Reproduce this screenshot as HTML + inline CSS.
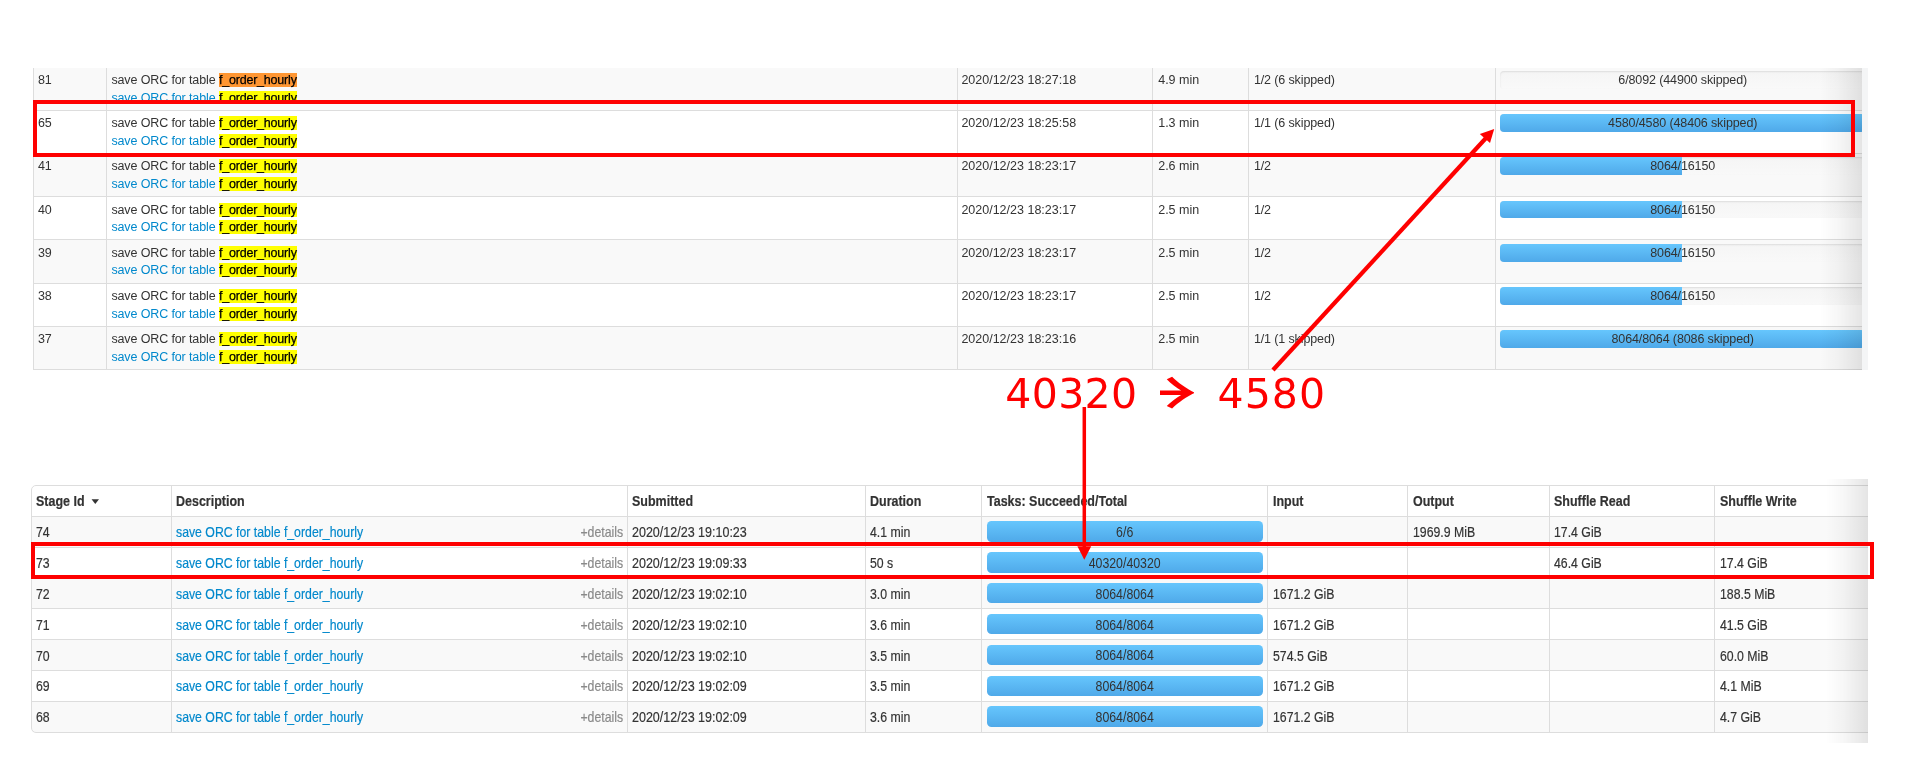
<!DOCTYPE html><html><head><meta charset="utf-8"><title>Spark stages</title><style>
*{box-sizing:border-box}
html,body{margin:0;padding:0}
body{width:1920px;height:776px;position:relative;overflow:hidden;background:#fff;font-family:"Liberation Sans",sans-serif;color:#333}
.abs,.t,.b,.v,.hz,.bg,.pb,.pf{position:absolute}
a{color:#0088cc;text-decoration:none}
/* top screenshot */
#top{position:absolute;left:0;top:68px;width:1862px;height:302px;overflow:hidden}
#top .in{position:absolute;left:0;top:-68px;width:1920px;height:776px;will-change:transform}
.t{font-size:12.5px;line-height:17px;white-space:nowrap;letter-spacing:-0.12px}
.hl,.hlo{background:#ffff00;color:#000;letter-spacing:-0.2px;-webkit-text-stroke:.25px #000}
.hlo{background:#ff9632}
.v{width:1px;background:#ddd}
.hz{height:1px;background:#ddd}
.bg{background:#f9f9f9}
.pb{border-radius:4px;background:linear-gradient(#f5f5f5,#f9f9f9);box-shadow:inset 0 1px 2px rgba(0,0,0,.1);overflow:hidden}
.pf{left:0;top:0;height:100%;background:linear-gradient(#66c6fd,#4fa9e9)}
.pt{position:absolute;left:0;top:0;width:100%;text-align:center;font-size:12.5px;line-height:17px;white-space:nowrap;letter-spacing:-0.12px}
/* bottom screenshot */
#bot{position:absolute;left:0;top:479px;width:1867.5px;height:264px;overflow:hidden}
#bot .in{position:absolute;left:0;top:-479px;width:1920px;height:776px;will-change:transform}
.b{font-size:15px;line-height:20px;white-space:nowrap;transform:scaleX(.819);transform-origin:0 50%;-webkit-text-stroke:.2px}
.b b{font-weight:bold}
.bc{position:absolute;left:0;top:0;width:100%;text-align:center;font-size:15px;line-height:20px;white-space:nowrap;transform:scaleX(.822)}
.det{color:#8a8a8a;transform-origin:100% 50%}
.pb2{position:absolute;border-radius:4.5px;background:linear-gradient(#66c6fd,#4fa9e9);overflow:hidden}
.shade{position:absolute;width:42px;background:linear-gradient(to right,rgba(0,0,0,0),rgba(0,0,0,.03) 42%,rgba(0,0,0,.1))}
</style></head><body>
<div id="top"><div class="in">
<div class="bg" style="left:33px;top:67.0px;width:1830px;height:43.2px"></div>
<div class="bg" style="left:33px;top:153.4px;width:1830px;height:43.2px"></div>
<div class="bg" style="left:33px;top:239.8px;width:1830px;height:43.2px"></div>
<div class="bg" style="left:33px;top:326.2px;width:1830px;height:43.2px"></div>
<div class="hz" style="left:33px;top:109.7px;width:1830px"></div>
<div class="hz" style="left:33px;top:152.9px;width:1830px"></div>
<div class="hz" style="left:33px;top:196.1px;width:1830px"></div>
<div class="hz" style="left:33px;top:239.3px;width:1830px"></div>
<div class="hz" style="left:33px;top:282.5px;width:1830px"></div>
<div class="hz" style="left:33px;top:325.7px;width:1830px"></div>
<div class="hz" style="left:33px;top:368.9px;width:1830px"></div>
<div class="t" style="left:37.9px;top:72.0px">81</div>
<div class="t" style="left:111.4px;top:72.0px">save ORC for table <span class="hlo">f_order_hourly</span></div>
<div class="t" style="left:111.4px;top:90.0px"><a>save ORC for table </a><span class="hl">f_order_hourly</span></div>
<div class="t" style="left:961.4px;top:72.0px;letter-spacing:0">2020/12/23 18:27:18</div>
<div class="t" style="left:1158.2px;top:72.0px;letter-spacing:0">4.9 min</div>
<div class="t" style="left:1253.9px;top:72.0px">1/2 (6 skipped)</div>
<div class="bg" style="left:100px;top:100.5px;width:500px;height:9.2px"></div>
<div class="pb" style="left:1500.2px;top:71.0px;width:365px;height:17.8px"><div class="pf" style="width:0.00%"></div><div class="pt" style="top:1.0px">6/8092 (44900 skipped)</div></div>
<div class="t" style="left:37.9px;top:115.0px">65</div>
<div class="t" style="left:111.4px;top:115.0px">save ORC for table <span class="hl">f_order_hourly</span></div>
<div class="t" style="left:111.4px;top:133.0px"><a>save ORC for table </a><span class="hl">f_order_hourly</span></div>
<div class="t" style="left:961.4px;top:115.0px;letter-spacing:0">2020/12/23 18:25:58</div>
<div class="t" style="left:1158.2px;top:115.0px;letter-spacing:0">1.3 min</div>
<div class="t" style="left:1253.9px;top:115.0px">1/1 (6 skipped)</div>
<div class="pb" style="left:1500.2px;top:114.2px;width:365px;height:17.8px"><div class="pf" style="width:100.00%"></div><div class="pt" style="top:0.8px">4580/4580 (48406 skipped)</div></div>
<div class="t" style="left:37.9px;top:158.0px">41</div>
<div class="t" style="left:111.4px;top:158.0px">save ORC for table <span class="hl">f_order_hourly</span></div>
<div class="t" style="left:111.4px;top:176.0px"><a>save ORC for table </a><span class="hl">f_order_hourly</span></div>
<div class="t" style="left:961.4px;top:158.0px;letter-spacing:0">2020/12/23 18:23:17</div>
<div class="t" style="left:1158.2px;top:158.0px;letter-spacing:0">2.6 min</div>
<div class="t" style="left:1253.9px;top:158.0px">1/2</div>
<div class="pb" style="left:1500.2px;top:157.4px;width:365px;height:17.8px"><div class="pf" style="width:49.93%"></div><div class="pt" style="top:0.6px">8064/16150</div></div>
<div class="t" style="left:37.9px;top:202.0px">40</div>
<div class="t" style="left:111.4px;top:202.0px">save ORC for table <span class="hl">f_order_hourly</span></div>
<div class="t" style="left:111.4px;top:219.0px"><a>save ORC for table </a><span class="hl">f_order_hourly</span></div>
<div class="t" style="left:961.4px;top:202.0px;letter-spacing:0">2020/12/23 18:23:17</div>
<div class="t" style="left:1158.2px;top:202.0px;letter-spacing:0">2.5 min</div>
<div class="t" style="left:1253.9px;top:202.0px">1/2</div>
<div class="pb" style="left:1500.2px;top:200.6px;width:365px;height:17.8px"><div class="pf" style="width:49.93%"></div><div class="pt" style="top:1.4px">8064/16150</div></div>
<div class="t" style="left:37.9px;top:245.0px">39</div>
<div class="t" style="left:111.4px;top:245.0px">save ORC for table <span class="hl">f_order_hourly</span></div>
<div class="t" style="left:111.4px;top:262.0px"><a>save ORC for table </a><span class="hl">f_order_hourly</span></div>
<div class="t" style="left:961.4px;top:245.0px;letter-spacing:0">2020/12/23 18:23:17</div>
<div class="t" style="left:1158.2px;top:245.0px;letter-spacing:0">2.5 min</div>
<div class="t" style="left:1253.9px;top:245.0px">1/2</div>
<div class="pb" style="left:1500.2px;top:243.8px;width:365px;height:17.8px"><div class="pf" style="width:49.93%"></div><div class="pt" style="top:1.2px">8064/16150</div></div>
<div class="t" style="left:37.9px;top:288.0px">38</div>
<div class="t" style="left:111.4px;top:288.0px">save ORC for table <span class="hl">f_order_hourly</span></div>
<div class="t" style="left:111.4px;top:306.0px"><a>save ORC for table </a><span class="hl">f_order_hourly</span></div>
<div class="t" style="left:961.4px;top:288.0px;letter-spacing:0">2020/12/23 18:23:17</div>
<div class="t" style="left:1158.2px;top:288.0px;letter-spacing:0">2.5 min</div>
<div class="t" style="left:1253.9px;top:288.0px">1/2</div>
<div class="pb" style="left:1500.2px;top:287.0px;width:365px;height:17.8px"><div class="pf" style="width:49.93%"></div><div class="pt" style="top:1.0px">8064/16150</div></div>
<div class="t" style="left:37.9px;top:331.0px">37</div>
<div class="t" style="left:111.4px;top:331.0px">save ORC for table <span class="hl">f_order_hourly</span></div>
<div class="t" style="left:111.4px;top:349.0px"><a>save ORC for table </a><span class="hl">f_order_hourly</span></div>
<div class="t" style="left:961.4px;top:331.0px;letter-spacing:0">2020/12/23 18:23:16</div>
<div class="t" style="left:1158.2px;top:331.0px;letter-spacing:0">2.5 min</div>
<div class="t" style="left:1253.9px;top:331.0px">1/1 (1 skipped)</div>
<div class="pb" style="left:1500.2px;top:330.2px;width:365px;height:17.8px"><div class="pf" style="width:100.00%"></div><div class="pt" style="top:0.8px">8064/8064 (8086 skipped)</div></div>
<div class="v" style="left:33.3px;top:60px;width:1px;height:309.4px"></div>
<div class="v" style="left:106.2px;top:60px;width:1px;height:309.4px"></div>
<div class="v" style="left:957.2px;top:60px;width:1px;height:309.4px"></div>
<div class="v" style="left:1152.0px;top:60px;width:1px;height:309.4px"></div>
<div class="v" style="left:1247.8px;top:60px;width:1px;height:309.4px"></div>
<div class="v" style="left:1494.9px;top:60px;width:1px;height:309.4px"></div>
<div class="shade" style="left:1820px;top:60px;height:320px"></div>
</div></div>
<div class="abs" style="left:1862px;top:68px;width:5.5px;height:302px;background:#f4f5f6"></div>
<div id="bot"><div class="in">
<div class="bg" style="left:32px;top:516.3px;width:1840px;height:30.87px"></div>
<div class="bg" style="left:32px;top:578.0px;width:1840px;height:30.87px"></div>
<div class="bg" style="left:32px;top:639.8px;width:1840px;height:30.87px"></div>
<div class="bg" style="left:32px;top:701.5px;width:1840px;height:30.87px"></div>
<div class="abs" style="left:31px;top:485px;width:1860px;height:248.1px;border:1.2px solid #ddd;border-radius:5px"></div>
<div class="hz" style="left:32px;top:515.7px;width:1840px;height:1.2px"></div>
<div class="hz" style="left:32px;top:546.6px;width:1840px;height:1.2px"></div>
<div class="hz" style="left:32px;top:577.4px;width:1840px;height:1.2px"></div>
<div class="hz" style="left:32px;top:608.3px;width:1840px;height:1.2px"></div>
<div class="hz" style="left:32px;top:639.2px;width:1840px;height:1.2px"></div>
<div class="hz" style="left:32px;top:670.0px;width:1840px;height:1.2px"></div>
<div class="hz" style="left:32px;top:700.9px;width:1840px;height:1.2px"></div>
<div class="v" style="left:171.1px;top:485.5px;width:1.2px;height:246.9px"></div>
<div class="v" style="left:627.0px;top:485.5px;width:1.2px;height:246.9px"></div>
<div class="v" style="left:864.9px;top:485.5px;width:1.2px;height:246.9px"></div>
<div class="v" style="left:981.2px;top:485.5px;width:1.2px;height:246.9px"></div>
<div class="v" style="left:1266.9px;top:485.5px;width:1.2px;height:246.9px"></div>
<div class="v" style="left:1406.9px;top:485.5px;width:1.2px;height:246.9px"></div>
<div class="v" style="left:1548.5px;top:485.5px;width:1.2px;height:246.9px"></div>
<div class="v" style="left:1713.9px;top:485.5px;width:1.2px;height:246.9px"></div>
<div class="b" style="left:35.5px;top:491.0px;transform:scaleX(.832)"><b>Stage Id</b></div>
<div class="b" style="left:176.2px;top:491.0px;transform:scaleX(.832)"><b>Description</b></div>
<div class="b" style="left:632.0px;top:491.0px;transform:scaleX(.832)"><b>Submitted</b></div>
<div class="b" style="left:870.3px;top:491.0px;transform:scaleX(.832)"><b>Duration</b></div>
<div class="b" style="left:986.5px;top:491.0px;transform:scaleX(.832)"><b>Tasks: Succeeded/Total</b></div>
<div class="b" style="left:1272.7px;top:491.0px;transform:scaleX(.832)"><b>Input</b></div>
<div class="b" style="left:1412.7px;top:491.0px;transform:scaleX(.832)"><b>Output</b></div>
<div class="b" style="left:1554.0px;top:491.0px;transform:scaleX(.832)"><b>Shuffle Read</b></div>
<div class="b" style="left:1719.7px;top:491.0px;transform:scaleX(.832)"><b>Shuffle Write</b></div>
<div class="abs" id="caret" style="left:91.4px;top:491px;font-size:15px;line-height:20px;transform:scaleY(.62);font-family:'DejaVu Sans',sans-serif;color:#333">&#9662;</div>
<div class="b" style="left:35.5px;top:522.0px">74</div>
<div class="b" style="left:176.2px;top:522.0px"><a>save ORC for table f_order_hourly</a></div>
<div class="b det" style="right:1297.2px;top:522.0px">+details</div>
<div class="b" style="left:632.0px;top:522.0px;transform:scaleX(.834)">2020/12/23 19:10:23</div>
<div class="b" style="left:870.3px;top:522.0px">4.1 min</div>
<div class="pb2" style="left:987.2px;top:521.2px;width:275.4px;height:20.6px"><div class="bc" style="top:0.8px">6/6</div></div>
<div class="b" style="left:1412.7px;top:522.0px">1969.9 MiB</div>
<div class="b" style="left:1554.0px;top:522.0px">17.4 GiB</div>
<div class="b" style="left:35.5px;top:552.9px">73</div>
<div class="b" style="left:176.2px;top:552.9px"><a>save ORC for table f_order_hourly</a></div>
<div class="b det" style="right:1297.2px;top:552.9px">+details</div>
<div class="b" style="left:632.0px;top:552.9px;transform:scaleX(.834)">2020/12/23 19:09:33</div>
<div class="b" style="left:870.3px;top:552.9px">50 s</div>
<div class="pb2" style="left:987.2px;top:552.1px;width:275.4px;height:20.6px"><div class="bc" style="top:0.8px">40320/40320</div></div>
<div class="b" style="left:1554.0px;top:552.9px">46.4 GiB</div>
<div class="b" style="left:1719.7px;top:552.9px">17.4 GiB</div>
<div class="b" style="left:35.5px;top:583.7px">72</div>
<div class="b" style="left:176.2px;top:583.7px"><a>save ORC for table f_order_hourly</a></div>
<div class="b det" style="right:1297.2px;top:583.7px">+details</div>
<div class="b" style="left:632.0px;top:583.7px;transform:scaleX(.834)">2020/12/23 19:02:10</div>
<div class="b" style="left:870.3px;top:583.7px">3.0 min</div>
<div class="pb2" style="left:987.2px;top:582.9px;width:275.4px;height:20.6px"><div class="bc" style="top:0.8px">8064/8064</div></div>
<div class="b" style="left:1272.7px;top:583.7px">1671.2 GiB</div>
<div class="b" style="left:1719.7px;top:583.7px">188.5 MiB</div>
<div class="b" style="left:35.5px;top:614.6px">71</div>
<div class="b" style="left:176.2px;top:614.6px"><a>save ORC for table f_order_hourly</a></div>
<div class="b det" style="right:1297.2px;top:614.6px">+details</div>
<div class="b" style="left:632.0px;top:614.6px;transform:scaleX(.834)">2020/12/23 19:02:10</div>
<div class="b" style="left:870.3px;top:614.6px">3.6 min</div>
<div class="pb2" style="left:987.2px;top:613.8px;width:275.4px;height:20.6px"><div class="bc" style="top:0.8px">8064/8064</div></div>
<div class="b" style="left:1272.7px;top:614.6px">1671.2 GiB</div>
<div class="b" style="left:1719.7px;top:614.6px">41.5 GiB</div>
<div class="b" style="left:35.5px;top:645.5px">70</div>
<div class="b" style="left:176.2px;top:645.5px"><a>save ORC for table f_order_hourly</a></div>
<div class="b det" style="right:1297.2px;top:645.5px">+details</div>
<div class="b" style="left:632.0px;top:645.5px;transform:scaleX(.834)">2020/12/23 19:02:10</div>
<div class="b" style="left:870.3px;top:645.5px">3.5 min</div>
<div class="pb2" style="left:987.2px;top:644.7px;width:275.4px;height:20.6px"><div class="bc" style="top:0.8px">8064/8064</div></div>
<div class="b" style="left:1272.7px;top:645.5px">574.5 GiB</div>
<div class="b" style="left:1719.7px;top:645.5px">60.0 MiB</div>
<div class="b" style="left:35.5px;top:676.4px">69</div>
<div class="b" style="left:176.2px;top:676.4px"><a>save ORC for table f_order_hourly</a></div>
<div class="b det" style="right:1297.2px;top:676.4px">+details</div>
<div class="b" style="left:632.0px;top:676.4px;transform:scaleX(.834)">2020/12/23 19:02:09</div>
<div class="b" style="left:870.3px;top:676.4px">3.5 min</div>
<div class="pb2" style="left:987.2px;top:675.5px;width:275.4px;height:20.6px"><div class="bc" style="top:0.8px">8064/8064</div></div>
<div class="b" style="left:1272.7px;top:676.4px">1671.2 GiB</div>
<div class="b" style="left:1719.7px;top:676.4px">4.1 MiB</div>
<div class="b" style="left:35.5px;top:707.2px">68</div>
<div class="b" style="left:176.2px;top:707.2px"><a>save ORC for table f_order_hourly</a></div>
<div class="b det" style="right:1297.2px;top:707.2px">+details</div>
<div class="b" style="left:632.0px;top:707.2px;transform:scaleX(.834)">2020/12/23 19:02:09</div>
<div class="b" style="left:870.3px;top:707.2px">3.6 min</div>
<div class="pb2" style="left:987.2px;top:706.4px;width:275.4px;height:20.6px"><div class="bc" style="top:0.8px">8064/8064</div></div>
<div class="b" style="left:1272.7px;top:707.2px">1671.2 GiB</div>
<div class="b" style="left:1719.7px;top:707.2px">4.7 GiB</div>
<div class="shade" style="left:1826px;top:470px;height:290px"></div>
</div></div>
<div class="abs" style="left:32.7px;top:100px;width:1822.3px;height:57px;border:4.3px solid #fe0000"></div>
<div class="abs" style="left:30.8px;top:541.9px;width:1843.2px;height:37.2px;border:4.4px solid #fe0000"></div>
<div class="abs" id="n1" style="left:1005.3px;top:366px;font-size:41px;line-height:56px;letter-spacing:.35px;color:#fe0000;font-family:'DejaVu Sans',sans-serif;white-space:nowrap">40320</div>
<div class="abs" id="n2" style="left:1159.6px;top:359px;width:34.3px;height:60px;overflow:hidden"><div style="position:absolute;right:-4.4px;top:0;font-size:50px;line-height:60px;color:#fe0000;font-family:'Noto Sans CJK SC',sans-serif;font-weight:400;white-space:nowrap;transform:scale(1.78,1.33);transform-origin:100% 50%">&#8594;</div></div>
<div class="abs" id="n3" style="left:1217.5px;top:366px;font-size:41px;line-height:56px;letter-spacing:1.1px;color:#fe0000;font-family:'DejaVu Sans',sans-serif;white-space:nowrap">4580</div>
<svg class="abs" style="left:0;top:0" width="1920" height="776" viewBox="0 0 1920 776"><g stroke="#fe0000" fill="#fe0000"><line x1="1084.3" y1="407" x2="1084.3" y2="548" stroke-width="3.5"/><polygon points="1077.4,546.3 1091.2,546.3 1084.3,559.7" stroke="none"/><line x1="1273" y1="370" x2="1486" y2="138" stroke-width="4.2"/><polygon points="1494.2,129 1479.8,134 1490,143" stroke="none"/></g></svg>
</body></html>
